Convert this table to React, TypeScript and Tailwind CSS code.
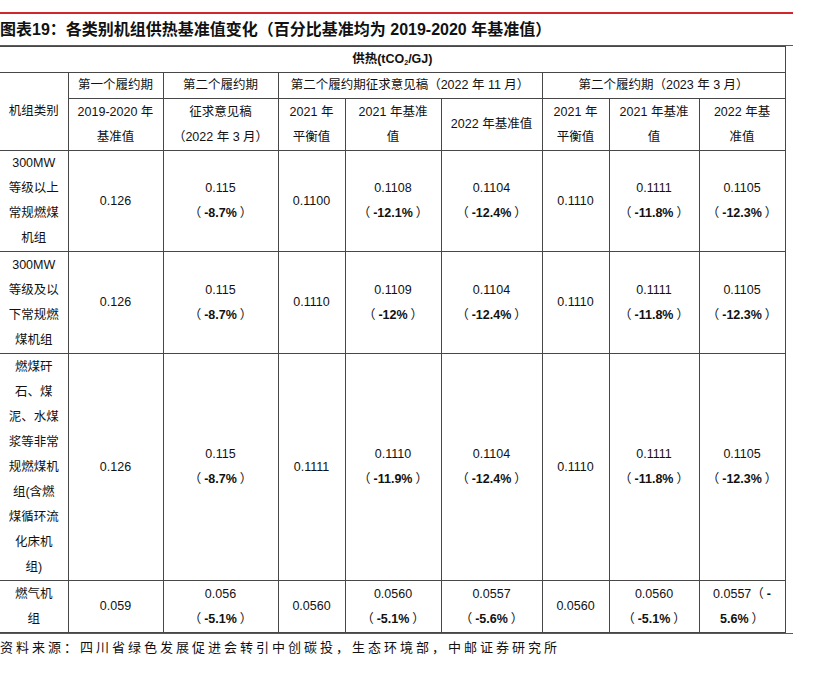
import React from "react";

const FONT = '"Liberation Sans", "Noto Sans CJK SC", Arial, sans-serif';

function Pct({ v }: { v: string }) {
  return (
    <>
      （<b className="font-bold px-[3px]">{v}</b>）
    </>
  );
}

function Td({
  children,
  className = "",
  colSpan,
  rowSpan,
}: {
  children?: React.ReactNode;
  className?: string;
  colSpan?: number;
  rowSpan?: number;
}) {
  return (
    <td
      colSpan={colSpan}
      rowSpan={rowSpan}
      className={`border border-[#474747] p-0 text-center align-middle leading-[25px] ${className}`}
    >
      {children}
    </td>
  );
}

type Row = {
  h: string;
  name: React.ReactNode;
  c: React.ReactNode[];
};

const rows: Row[] = [
  {
    h: "h-[100px]",
    name: (
      <>
        300MW
        <br />
        等级以上
        <br />
        常规燃煤
        <br />
        机组
      </>
    ),
    c: [
      "0.126",
      <>0.115<br /><Pct v="-8.7%" /></>,
      "0.1100",
      <>0.1108<br /><Pct v="-12.1%" /></>,
      <>0.1104<br /><Pct v="-12.4%" /></>,
      "0.1110",
      <>0.1111<br /><Pct v="-11.8%" /></>,
      <>0.1105<br /><Pct v="-12.3%" /></>,
    ],
  },
  {
    h: "h-[102px]",
    name: (
      <>
        300MW
        <br />
        等级及以
        <br />
        下常规燃
        <br />
        煤机组
      </>
    ),
    c: [
      "0.126",
      <>0.115<br /><Pct v="-8.7%" /></>,
      "0.1110",
      <>0.1109<br /><Pct v="-12%" /></>,
      <>0.1104<br /><Pct v="-12.4%" /></>,
      "0.1110",
      <>0.1111<br /><Pct v="-11.8%" /></>,
      <>0.1105<br /><Pct v="-12.3%" /></>,
    ],
  },
  {
    h: "h-[227px]",
    name: (
      <>
        燃煤矸
        <br />
        石、煤
        <br />
        泥、水煤
        <br />
        浆等非常
        <br />
        规燃煤机
        <br />
        组(含燃
        <br />
        煤循环流
        <br />
        化床机
        <br />
        组)
      </>
    ),
    c: [
      "0.126",
      <>0.115<br /><Pct v="-8.7%" /></>,
      "0.1111",
      <>0.1110<br /><Pct v="-11.9%" /></>,
      <>0.1104<br /><Pct v="-12.4%" /></>,
      "0.1110",
      <>0.1111<br /><Pct v="-11.8%" /></>,
      <>0.1105<br /><Pct v="-12.3%" /></>,
    ],
  },
  {
    h: "h-[52px]",
    name: (
      <>
        燃气机
        <br />
        组
      </>
    ),
    c: [
      "0.059",
      <>0.056<br /><Pct v="-5.1%" /></>,
      "0.0560",
      <>0.0560<br /><Pct v="-5.1%" /></>,
      <>0.0557<br /><Pct v="-5.6%" /></>,
      "0.0560",
      <>0.0560<br /><Pct v="-5.1%" /></>,
      <>
        0.0557（<b className="font-bold pl-[3px]">-</b>
        <br />
        <b className="font-bold pr-[3px]">5.6%</b>）
      </>,
    ],
  },
];

export default function App() {
  return (
    <div
      className="w-[815px] h-[676px] bg-white text-[#111] overflow-hidden"
      style={{ fontFamily: FONT }}
    >
      <div className="w-[793px] pt-[12px] flex flex-col">
        <div className="h-[2px] bg-[#d0262c]" />
        <div className="h-[31px] flex items-center text-[16px] font-bold whitespace-nowrap">
          图表19：各类别机组供热基准值变化（百分比基准均为 2019-2020 年基准值）
        </div>
        <div className="h-px bg-[#d0262c]" />
        <table className="w-[785px] table-fixed border-collapse text-[12.5px]">
          <colgroup>
            <col className="w-[68px]" />
            <col className="w-[95px]" />
            <col className="w-[115px]" />
            <col className="w-[67px]" />
            <col className="w-[96px]" />
            <col className="w-[101px]" />
            <col className="w-[67px]" />
            <col className="w-[90px]" />
            <col className="w-[86px]" />
          </colgroup>
          <tbody>
            <tr className="h-[26px]">
              <Td colSpan={9} className="border-l-0 font-bold">
                供热(tCO<sub className="text-[7px] align-baseline relative top-[2px]">2</sub>/GJ)
              </Td>
            </tr>
            <tr className="h-[26px]">
              <Td rowSpan={2} className="border-l-0">
                机组类别
              </Td>
              <Td>第一个履约期</Td>
              <Td>第二个履约期</Td>
              <Td colSpan={3} className="whitespace-nowrap">
                第二个履约期征求意见稿（2022 年 11 月）
              </Td>
              <Td colSpan={3} className="whitespace-nowrap">
                第二个履约期（2023 年 3 月）
              </Td>
            </tr>
            <tr className="h-[52px]">
              <Td>
                2019-2020 年<br />基准值
              </Td>
              <Td>
                征求意见稿
                <br />（2022 年 3 月）
              </Td>
              <Td>
                2021 年<br />平衡值
              </Td>
              <Td>
                2021 年基准
                <br />值
              </Td>
              <Td>2022 年基准值</Td>
              <Td>
                2021 年<br />平衡值
              </Td>
              <Td>
                2021 年基准
                <br />值
              </Td>
              <Td>
                2022 年基
                <br />准值
              </Td>
            </tr>
            {rows.map((r, i) => (
              <tr key={i} className={r.h}>
                <Td className="border-l-0">{r.name}</Td>
                {r.c.map((c, j) => (
                  <Td key={j}>{c}</Td>
                ))}
              </tr>
            ))}
          </tbody>
        </table>
        <div className="h-px bg-[#d0262c]" />
        <div className="pt-[2px] h-[26px] leading-[24px] text-[13px] tracking-[3px] whitespace-nowrap">
          资料来源：四川省绿色发展促进会转引中创碳投，生态环境部，中邮证券研究所
        </div>
      </div>
    </div>
  );
}
